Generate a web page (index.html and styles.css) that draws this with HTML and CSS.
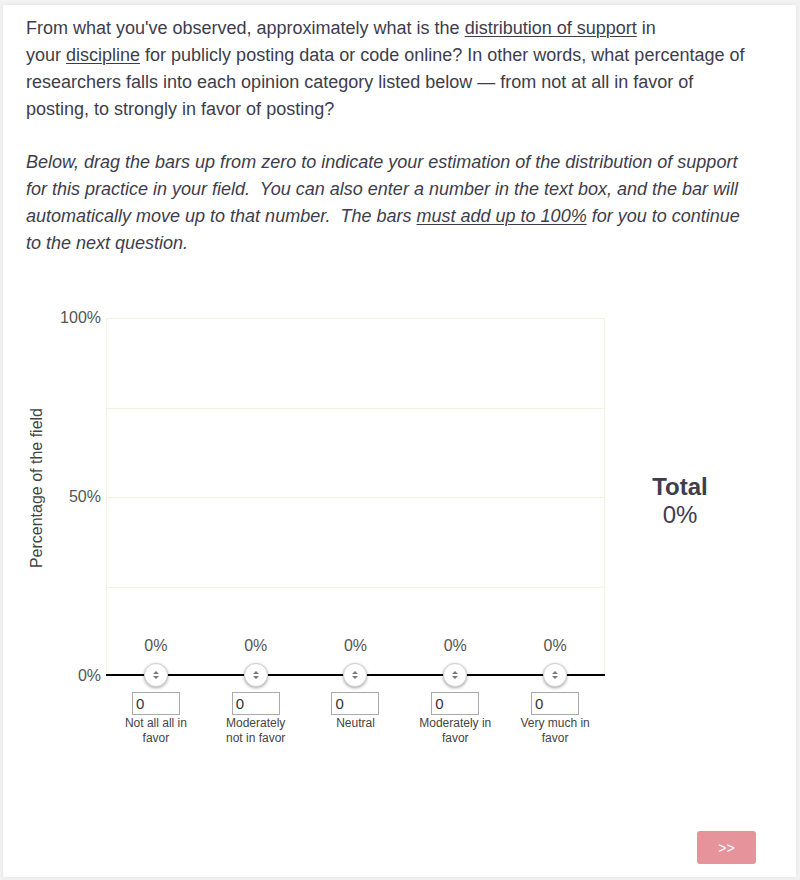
FILE: index.html
```html
<!DOCTYPE html>
<html>
<head>
<meta charset="utf-8">
<link rel="stylesheet" href="styles.css">
</head>
<body>
<div class="card">
  <div class="question">
    <p class="intro">From what you've observed, approximately what is the <u>distribution of support</u> in<br>your <u>discipline</u> for publicly posting data or code online? In other words, what percentage of researchers falls into each opinion category listed below — from not at all in favor of posting, to strongly in favor of posting?</p>
    <p class="instr">Below, drag the bars up from zero to indicate your estimation of the distribution of support for this practice in your field.&nbsp; You can also enter a number in the text box, and the bar will automatically move up to that number.&nbsp; The bars <u>must add up to 100%</u> for you to continue to the next question.</p>
  </div>

  <div class="chart">
    <div class="ytitle"><span>Percentage of the field</span></div>
    <div class="ylabels">
      <span>100%</span>
      <span>50%</span>
      <span>0%</span>
    </div>
    <div class="plotcol">
      <div class="plot">
        <div class="grid">
          <div class="gl g1"></div>
          <div class="gl g2"></div>
          <div class="gl g3"></div>
          <div class="gl zero"></div>
        </div>
        <div class="bars">
          <div class="bar"><span class="pct">0%</span><span class="handle"><svg width="8" height="10" viewBox="0 0 8 10"><path d="M4 1 L7 4 H1 Z M4 9 L7 6 H1 Z" fill="#777"/></svg></span></div>
          <div class="bar"><span class="pct">0%</span><span class="handle"><svg width="8" height="10" viewBox="0 0 8 10"><path d="M4 1 L7 4 H1 Z M4 9 L7 6 H1 Z" fill="#777"/></svg></span></div>
          <div class="bar"><span class="pct">0%</span><span class="handle"><svg width="8" height="10" viewBox="0 0 8 10"><path d="M4 1 L7 4 H1 Z M4 9 L7 6 H1 Z" fill="#777"/></svg></span></div>
          <div class="bar"><span class="pct">0%</span><span class="handle"><svg width="8" height="10" viewBox="0 0 8 10"><path d="M4 1 L7 4 H1 Z M4 9 L7 6 H1 Z" fill="#777"/></svg></span></div>
          <div class="bar"><span class="pct">0%</span><span class="handle"><svg width="8" height="10" viewBox="0 0 8 10"><path d="M4 1 L7 4 H1 Z M4 9 L7 6 H1 Z" fill="#777"/></svg></span></div>
        </div>
      </div>
      <div class="cats">
        <div class="cat"><input type="text" value="0"><span class="catlabel">Not all all in favor</span></div>
        <div class="cat"><input type="text" value="0"><span class="catlabel">Moderately not in favor</span></div>
        <div class="cat"><input type="text" value="0"><span class="catlabel">Neutral</span></div>
        <div class="cat"><input type="text" value="0"><span class="catlabel">Moderately in favor</span></div>
        <div class="cat"><input type="text" value="0"><span class="catlabel">Very much in favor</span></div>
      </div>
    </div>
    <div class="total">
      <div class="total-title">Total</div>
      <div class="total-val">0%</div>
    </div>
  </div>

  <div class="footer">
    <button class="next">&gt;&gt;</button>
  </div>
</div>
</body>
</html>
```

FILE: styles.css
```css
html, body {
  margin: 0;
  padding: 0;
  background: #f2f2f2;
}
body {
  font-family: "Liberation Sans", Arial, sans-serif;
  color: #3d3d4c;
}
.card {
  margin: 5px 4px 3px 3px;
  background: #fff;
  box-shadow: 0 0 4px rgba(0,0,0,0.08);
  padding: 10px 0 13px 0;
}
.question {
  padding: 0 46px 0 23px;
}
.question p {
  margin: 0;
  font-size: 18px;
  line-height: 27px;
}
.question .intro {
  margin-bottom: 26px;
}
.question .instr {
  font-style: italic;
}
.question u {
  text-decoration-thickness: 1px;
  text-underline-offset: 2px;
}

.chart {
  display: flex;
  margin-top: 61px;
  padding-left: 23px;
}
.ytitle {
  width: 22px;
  height: 358px;
  display: flex;
  align-items: center;
  justify-content: center;
}
.ytitle span {
  writing-mode: vertical-rl;
  transform: rotate(180deg);
  font-size: 16px;
  line-height: 22px;
  color: #444;
  white-space: nowrap;
  margin-bottom: 18px;
}
.ylabels {
  height: 376px;
  margin-top: -9px;
  display: flex;
  flex-direction: column;
  justify-content: space-between;
  align-items: flex-end;
  padding-right: 5px;
  box-sizing: border-box;
  width: 58px;
}
.ylabels span {
  font-size: 16px;
  line-height: 18px;
  color: #555;
}
.plotcol {
  width: 499px;
}
.plot {
  display: grid;
  height: 358px;
}
.grid, .bars {
  grid-area: 1 / 1;
}
.grid {
  display: flex;
  flex-direction: column;
  border-top: 1px solid #f3f2de;
  border-left: 1px solid #f3f2de;
  border-right: 1px solid #f3f2de;
}
.gl {
  flex: none;
  border-bottom: 1px solid #f3f2de;
}
.gl.g1 { height: 89px; }
.gl.g2 { height: 88px; }
.gl.g3 { height: 89px; }
.gl.zero {
  height: 86px;
  border-bottom: 2px solid #000;
  margin-left: -1px;
  margin-right: -1px;
}
.bars {
  display: flex;
  align-items: flex-end;
}
.bar {
  flex: 1;
  display: flex;
  flex-direction: column;
  align-items: center;
}
.pct {
  font-size: 16px;
  line-height: 18px;
  color: #555;
  margin-bottom: 8px;
}
.handle {
  width: 24px;
  height: 24px;
  box-sizing: border-box;
  border-radius: 50%;
  background: #fff;
  border: 1px solid #cfcfcf;
  box-shadow: 0 1px 3px rgba(0,0,0,0.35);
  display: flex;
  align-items: center;
  justify-content: center;
  margin-bottom: -11px;
  position: relative;
}
.cats {
  display: flex;
  margin-top: 16px;
}
.cat {
  flex: 1;
  display: flex;
  flex-direction: column;
  align-items: center;
}
.cat input {
  width: 48px;
  height: 23px;
  box-sizing: border-box;
  border: 1px solid #aaa;
  padding: 0 0 0 3px;
  margin: 0;
  font-family: "Liberation Sans", Arial, sans-serif;
  font-size: 15px;
  color: #333;
  border-radius: 0;
  outline: none;
}
.catlabel {
  width: 78px;
  text-align: center;
  font-size: 12px;
  line-height: 15px;
  color: #444;
  margin-top: 1px;
}
.total {
  width: 150px;
  height: 358px;
  padding-top: 8px;
  box-sizing: border-box;
  display: flex;
  flex-direction: column;
  align-items: center;
  justify-content: center;
}
.total-title {
  font-size: 24px;
  font-weight: bold;
  line-height: 28px;
}
.total-val {
  font-size: 24px;
  line-height: 28px;
}
.footer {
  display: flex;
  justify-content: flex-end;
  padding-right: 40px;
  margin-top: 85px;
}
.next {
  width: 59px;
  height: 33px;
  border: none;
  border-radius: 3px;
  background: #e6939b;
  color: #fff;
  font-family: "Liberation Sans", Arial, sans-serif;
  font-size: 14px;
  padding: 0;
}
```
